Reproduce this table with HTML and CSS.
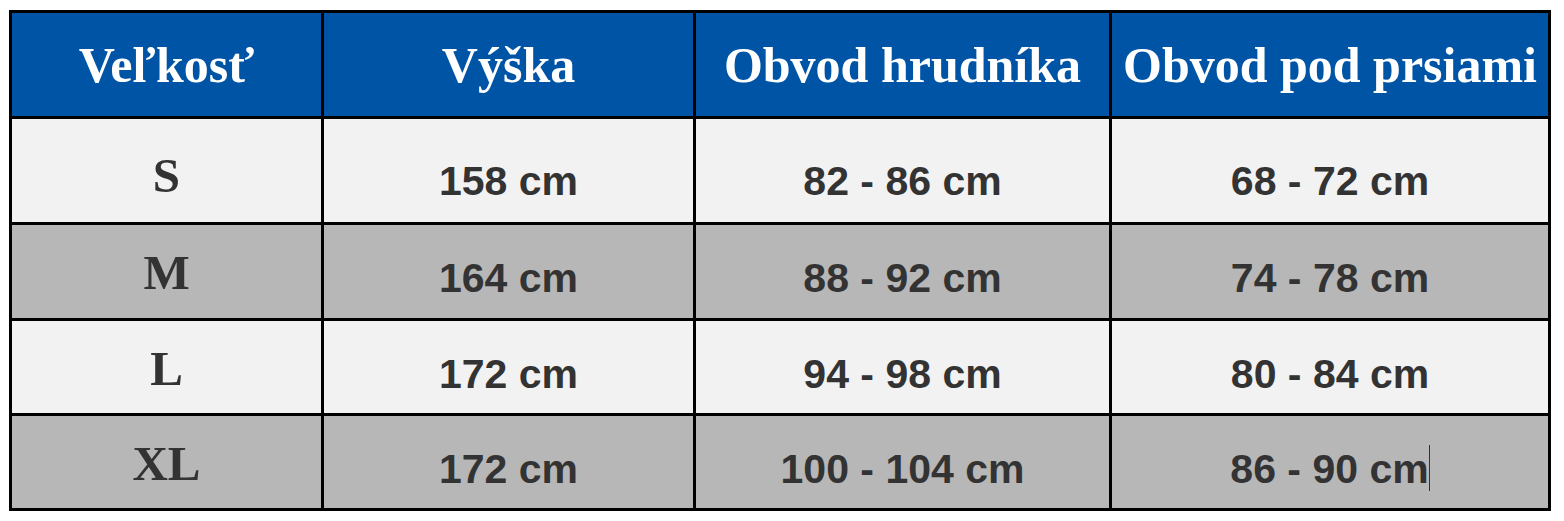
FILE: index.html
```html
<!DOCTYPE html>
<html lang="sk">
<head>
<meta charset="utf-8">
<title>Tabuľka veľkostí</title>
<link rel="stylesheet" href="styles.css">
</head>
<body>
<table class="sizes">
  <colgroup>
    <col class="c1"><col class="c2"><col class="c3"><col class="c4">
  </colgroup>
  <thead>
    <tr class="head">
      <th>Veľkosť</th>
      <th>Výška</th>
      <th>Obvod hrudníka</th>
      <th>Obvod pod prsiami</th>
    </tr>
  </thead>
  <tbody>
    <tr class="r1 light">
      <td class="size">S</td>
      <td class="val">158 cm</td>
      <td class="val">82 - 86 cm</td>
      <td class="val">68 - 72 cm</td>
    </tr>
    <tr class="r2 dark">
      <td class="size">M</td>
      <td class="val">164 cm</td>
      <td class="val">88 - 92 cm</td>
      <td class="val">74 - 78 cm</td>
    </tr>
    <tr class="r3 light">
      <td class="size">L</td>
      <td class="val">172 cm</td>
      <td class="val">94 - 98 cm</td>
      <td class="val">80 - 84 cm</td>
    </tr>
    <tr class="r4 dark">
      <td class="size">XL</td>
      <td class="val">172 cm</td>
      <td class="val">100 - 104 cm</td>
      <td class="val">86 - 90 cm<span class="caret"></span></td>
    </tr>
  </tbody>
</table>
</body>
</html>
```
FILE: styles.css
```css
html, body {
  margin: 0;
  padding: 0;
  background: #ffffff;
}

.sizes {
  margin: 10px 0 0 9px;
  border-collapse: collapse;
  table-layout: fixed;
  width: 1542px;
  border: 3px solid #000;
}

.c1 { width: 312px; }
.c2 { width: 372px; }
.c3 { width: 416px; }
.c4 { width: 439px; }

.sizes th,
.sizes td {
  border: 3px solid #000;
  padding: 0;
  text-align: center;
  vertical-align: middle;
  white-space: nowrap;
}

.head { height: 106px; }

.head th {
  background: #0054a5;
  color: #ffffff;
  font-family: "Liberation Serif", "Times New Roman", serif;
  font-weight: bold;
  font-size: 50px;
  line-height: 56px;
}

.light td { background: #f2f2f2; }
.dark td { background: #b7b7b7; }

.size {
  color: #333333;
  font-family: "Liberation Serif", "Times New Roman", serif;
  font-weight: bold;
  font-size: 49px;
  line-height: 56px;
}

.val {
  color: #333333;
  font-family: "Liberation Sans", Arial, sans-serif;
  font-weight: bold;
  font-size: 41px;
  line-height: 48px;
}

.r1 { height: 106px; }
.r2 { height: 96px; }
.r3 { height: 95px; }
.r4 { height: 95px; }

.r1 .size { padding-top: 11px; }
.r1 .val { padding-top: 21px; }
.r2 .size,
.r3 .size,
.r4 .size { padding-top: 3px; }
.r2 .val,
.r3 .val,
.r4 .val { padding-top: 13px; }

.caret {
  display: inline-block;
  width: 1px;
  height: 46px;
  background: #333333;
  vertical-align: -8px;
}
```
